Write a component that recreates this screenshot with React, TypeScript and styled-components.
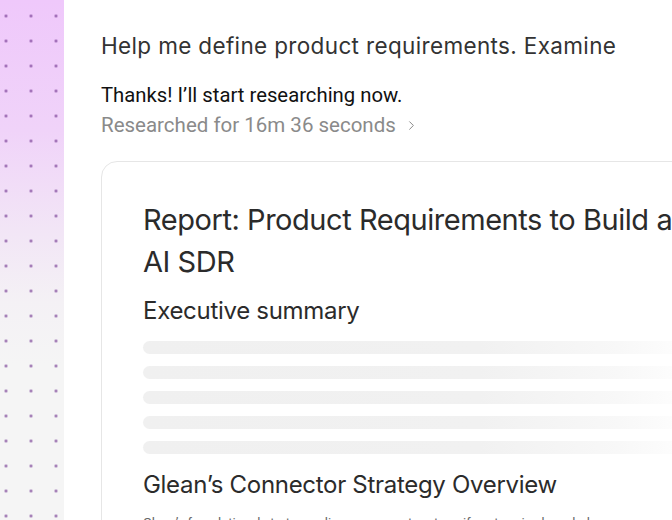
import * as React from 'react'
import styled, { createGlobalStyle } from 'styled-components'
import { ChevronRight } from 'lucide-react'

const GlobalStyle = createGlobalStyle`
  html, body {
    margin: 0;
    padding: 0;
    background: #ffffff;
  }
  body {
    font-family: Roboto, "Liberation Sans", sans-serif;
    -webkit-font-smoothing: antialiased;
  }
`

const Page = styled.div`
  display: flex;
  width: 672px;
  height: 520px;
  overflow: hidden;
`

const Rail = styled.aside`
  flex: 0 0 64px;
  height: 100%;
  background-color: #f5f5f5;
  background-image:
    radial-gradient(circle, rgba(115, 55, 145, 0.7) 1.1px, transparent 1.7px),
    linear-gradient(180deg, #efc8fb 0%, #f0d3f9 25%, #f2e6f6 45%, #f4f1f5 58%, #f5f5f5 70%);
  background-size: 25px 25px, 100% 100%;
  background-position: -6.5px 3.5px, 0 0;
`

const Main = styled.main`
  flex: 1;
  min-width: 0;
  padding: 30px 0 0 37px;
  overflow: hidden;
`

const Prompt = styled.h1`
  margin: 0;
  font-family: Inter, "Open Sans", sans-serif;
  font-weight: 400;
  font-size: 22.5px;
  line-height: 32px;
  color: #333333;
  letter-spacing: 0.35px;
  white-space: nowrap;
`

const Reply = styled.p`
  margin: 18px 0 0;
  font-size: 20.3px;
  line-height: 30px;
  color: #111111;
  white-space: nowrap;
`

const Meta = styled.div`
  display: flex;
  align-items: center;
  gap: 8px;
  font-size: 20.5px;
  line-height: 30px;
  color: #8a8a8a;
  white-space: nowrap;
`

const Card = styled.section`
  margin-top: 21px;
  width: 680px;
  box-sizing: border-box;
  padding: 37px 40px 0 41px;
  border: 1px solid #e6e6e6;
  border-radius: 16px;
  height: 400px;
`

const Title = styled.h2`
  margin: 0;
  font-family: Inter, "Open Sans", sans-serif;
  font-weight: 400;
  font-size: 29px;
  line-height: 42px;
  color: #2b2b2b;
  letter-spacing: -0.45px;
  max-width: 560px;
`

const Section = styled.h3<{ $gap: number }>`
  margin: ${(p) => p.$gap}px 0 0;
  font-family: Inter, "Open Sans", sans-serif;
  font-weight: 400;
  font-size: 24px;
  line-height: 32px;
  color: #2b2b2b;
  letter-spacing: -0.3px;
  white-space: nowrap;
`

const Lines = styled.div`
  display: flex;
  flex-direction: column;
  gap: 12px;
  margin-top: 14px;
`

const Line = styled.div`
  height: 13px;
  width: 560px;
  border-radius: 7px;
  background: linear-gradient(90deg, #f0f0f0 0%, #f1f1f1 60%, #f8f8f8 85%, #ffffff 100%);
`

const Body = styled.p`
  margin: 12px 0 0;
  font-size: 13px;
  line-height: 20px;
  color: #666666;
  white-space: nowrap;
`

export default function App() {
  return (
    <>
      <GlobalStyle />
      <Page>
        <Rail />
        <Main>
          <Prompt>Help me define product requirements. Examine</Prompt>
          <Reply>Thanks! I’ll start researching now.</Reply>
          <Meta>
            Researched for 16m 36 seconds
            <ChevronRight size={15} strokeWidth={1.6} />
          </Meta>
          <Card>
            <Title>Report: Product Requirements to Build an AI SDR</Title>
            <Section $gap={12}>Executive summary</Section>
            <Lines>
              {[0, 1, 2, 3, 4].map((i) => (
                <Line key={i} />
              ))}
            </Lines>
            <Section $gap={15}>Glean’s Connector Strategy Overview</Section>
            <Body>
              Glean’s foundational strategy relies on connectors to unify enterprise knowledge across every
              application
            </Body>
          </Card>
        </Main>
      </Page>
    </>
  )
}
